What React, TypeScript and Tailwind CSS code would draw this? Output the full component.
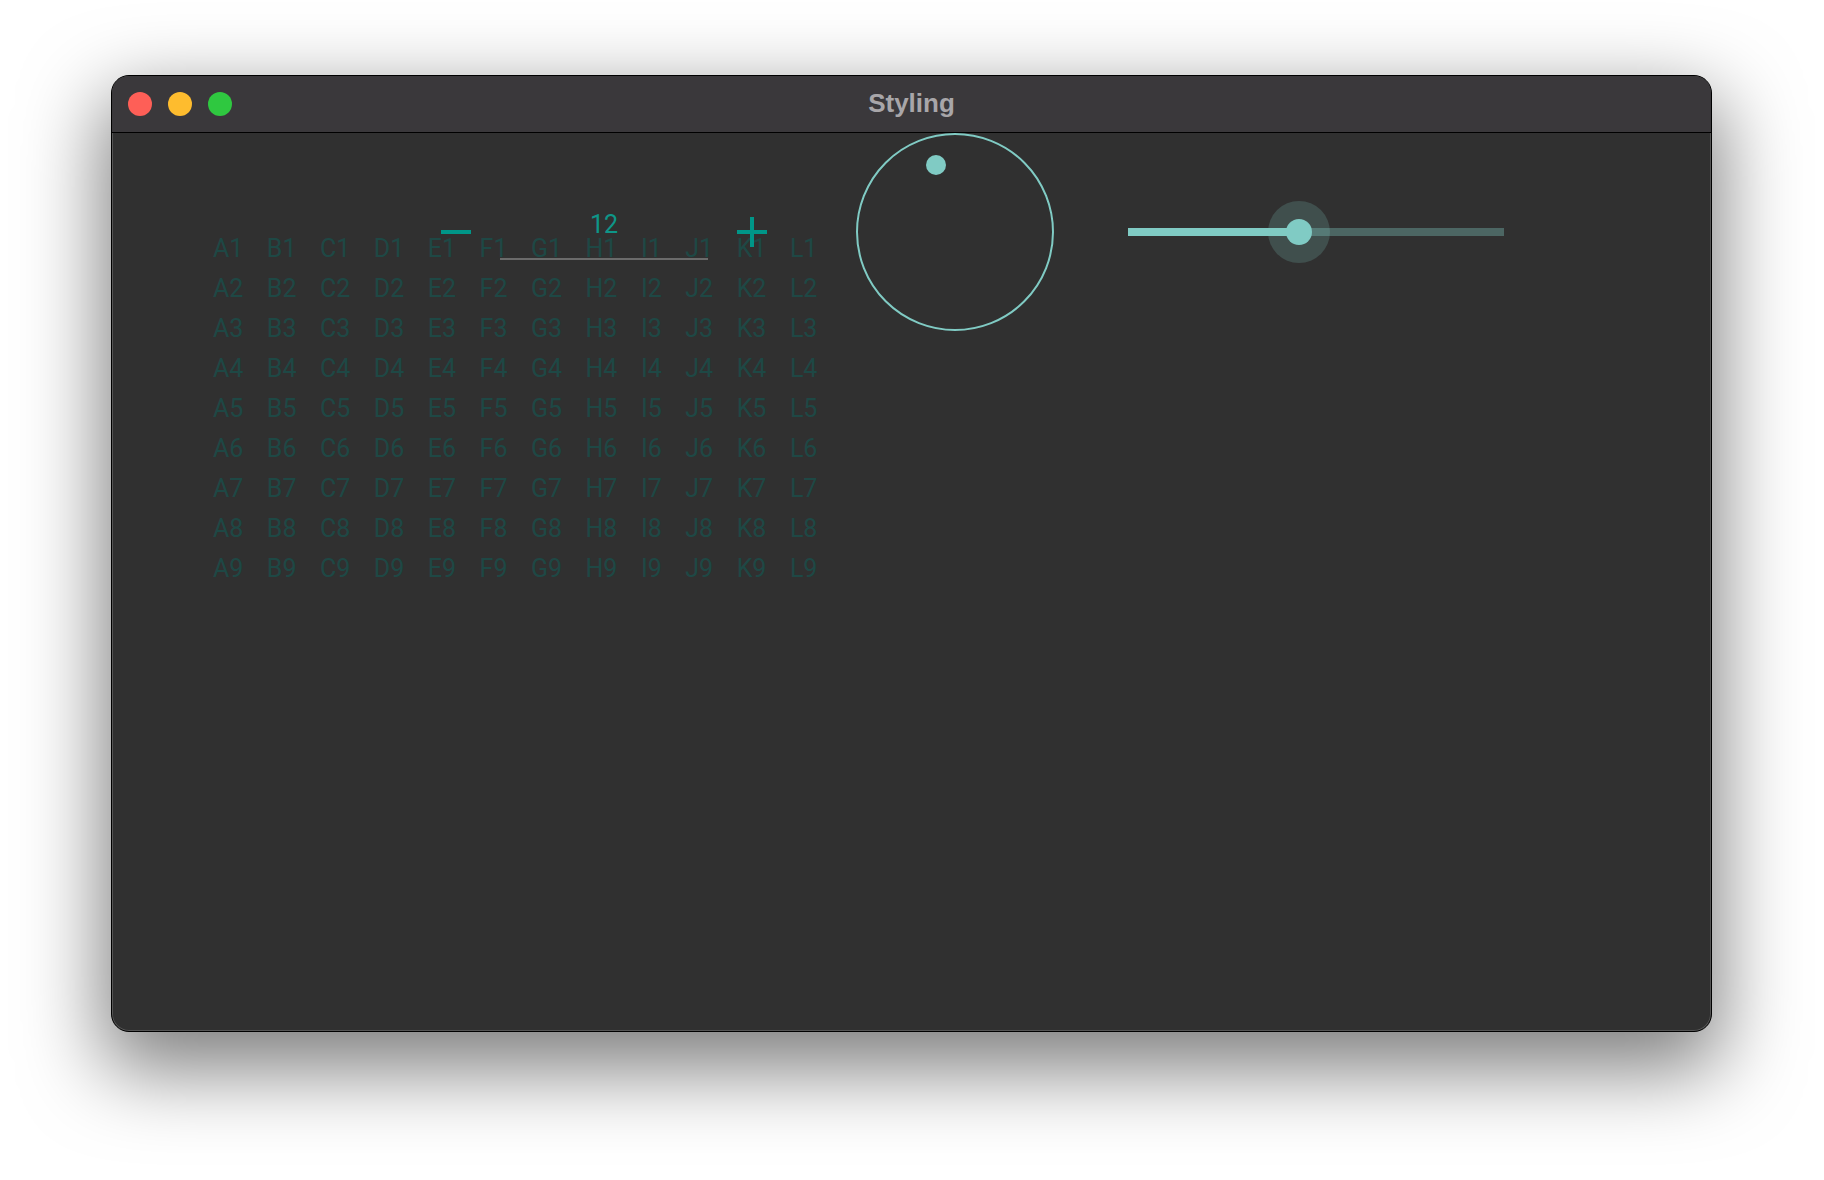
import { Fragment } from 'react';

const cols = ['A', 'B', 'C', 'D', 'E', 'F', 'G', 'H', 'I', 'J', 'K', 'L'];
const rows = [1, 2, 3, 4, 5, 6, 7, 8, 9];

function TrafficLights() {
  return (
    <div className="flex items-center gap-4 pl-4">
      <div className="w-6 h-6 rounded-full bg-[#fe5f57]" />
      <div className="w-6 h-6 rounded-full bg-[#febc2e]" />
      <div className="w-6 h-6 rounded-full bg-[#2fc840]" />
    </div>
  );
}

function Stepper({ value }: { value: number }) {
  return (
    <div className="flex items-center ml-[329px]">
      <button className="w-[30px] h-[4px] bg-[#009688]" aria-label="decrease" />
      <div className="ml-[29px] w-[208px] h-[56px] border-b-2 border-[#6b6b6b] pt-[8px] text-center text-[25px] leading-[25px] text-[#0e9688]">
        {value}
      </div>
      <button className="ml-[29px] w-[30px] h-[30px]" aria-label="increase">
        <svg width="30" height="30" viewBox="0 0 30 30">
          <rect x="0" y="13" width="30" height="4" fill="#009688" />
          <rect x="13" y="0" width="4" height="30" fill="#009688" />
        </svg>
      </button>
    </div>
  );
}

function Dial() {
  return (
    <div className="ml-[89px] relative w-[198px] h-[198px] rounded-full border-2 border-[#80cbc4] shrink-0">
      <div className="absolute left-[68px] top-[20px] w-5 h-5 rounded-full bg-[#80cbc4]" />
    </div>
  );
}

function Slider({ value }: { value: number }) {
  const pos = Math.round(376 * value);
  return (
    <div className="ml-[74px] relative w-[376px] h-[62px] flex items-center">
      <div className="w-full h-[8px] flex">
        <div className="h-full bg-[#80cbc4]" style={{ width: pos }} />
        <div className="h-full flex-1 bg-[#80cbc4]/35" />
      </div>
      <div
        className="absolute top-0 w-[62px] h-[62px] -ml-[31px] rounded-full bg-[#80cbc4]/20 flex items-center justify-center"
        style={{ left: pos }}
      >
        <div className="w-[26px] h-[26px] rounded-full bg-[#80cbc4]" />
      </div>
    </div>
  );
}

export default function App() {
  return (
    <div className="w-[1824px] h-[1180px] bg-white pl-[111px] pt-[75px] font-['Roboto',sans-serif]">
      <div className="w-[1601px] h-[957px] rounded-[18px] border border-black bg-[#303030] overflow-hidden flex flex-col shadow-[0_30px_80px_8px_rgba(0,0,0,0.5),inset_0_0_0_1px_rgba(255,255,255,0.18)]">
        <div className="relative h-[57px] shrink-0 bg-[#3a383b] border-b border-black flex items-center">
          <TrafficLights />
          <div className="absolute inset-0 flex items-center justify-center pointer-events-none">
            <span className="font-['Liberation_Sans',Arial,sans-serif] font-bold text-[26px] text-[#a8a6a9] -mt-[2px]">Styling</span>
          </div>
        </div>

        <div className="relative flex-1">
          <div className="pl-[101px] pt-[96px]">
            <div className="grid grid-cols-[repeat(12,auto)] gap-x-[23.5px] w-fit text-[25px] leading-[40px] text-[#1e4845]">
              {rows.map((r) => (
                <Fragment key={r}>
                  {cols.map((c) => (
                    <span key={c + r}>{c + r}</span>
                  ))}
                </Fragment>
              ))}
            </div>
          </div>

          <div className="absolute top-0 left-0 right-0 h-[198px] flex items-center">
            <Stepper value={12} />
            <Dial />
            <Slider value={0.455} />
          </div>
        </div>
      </div>
    </div>
  );
}
